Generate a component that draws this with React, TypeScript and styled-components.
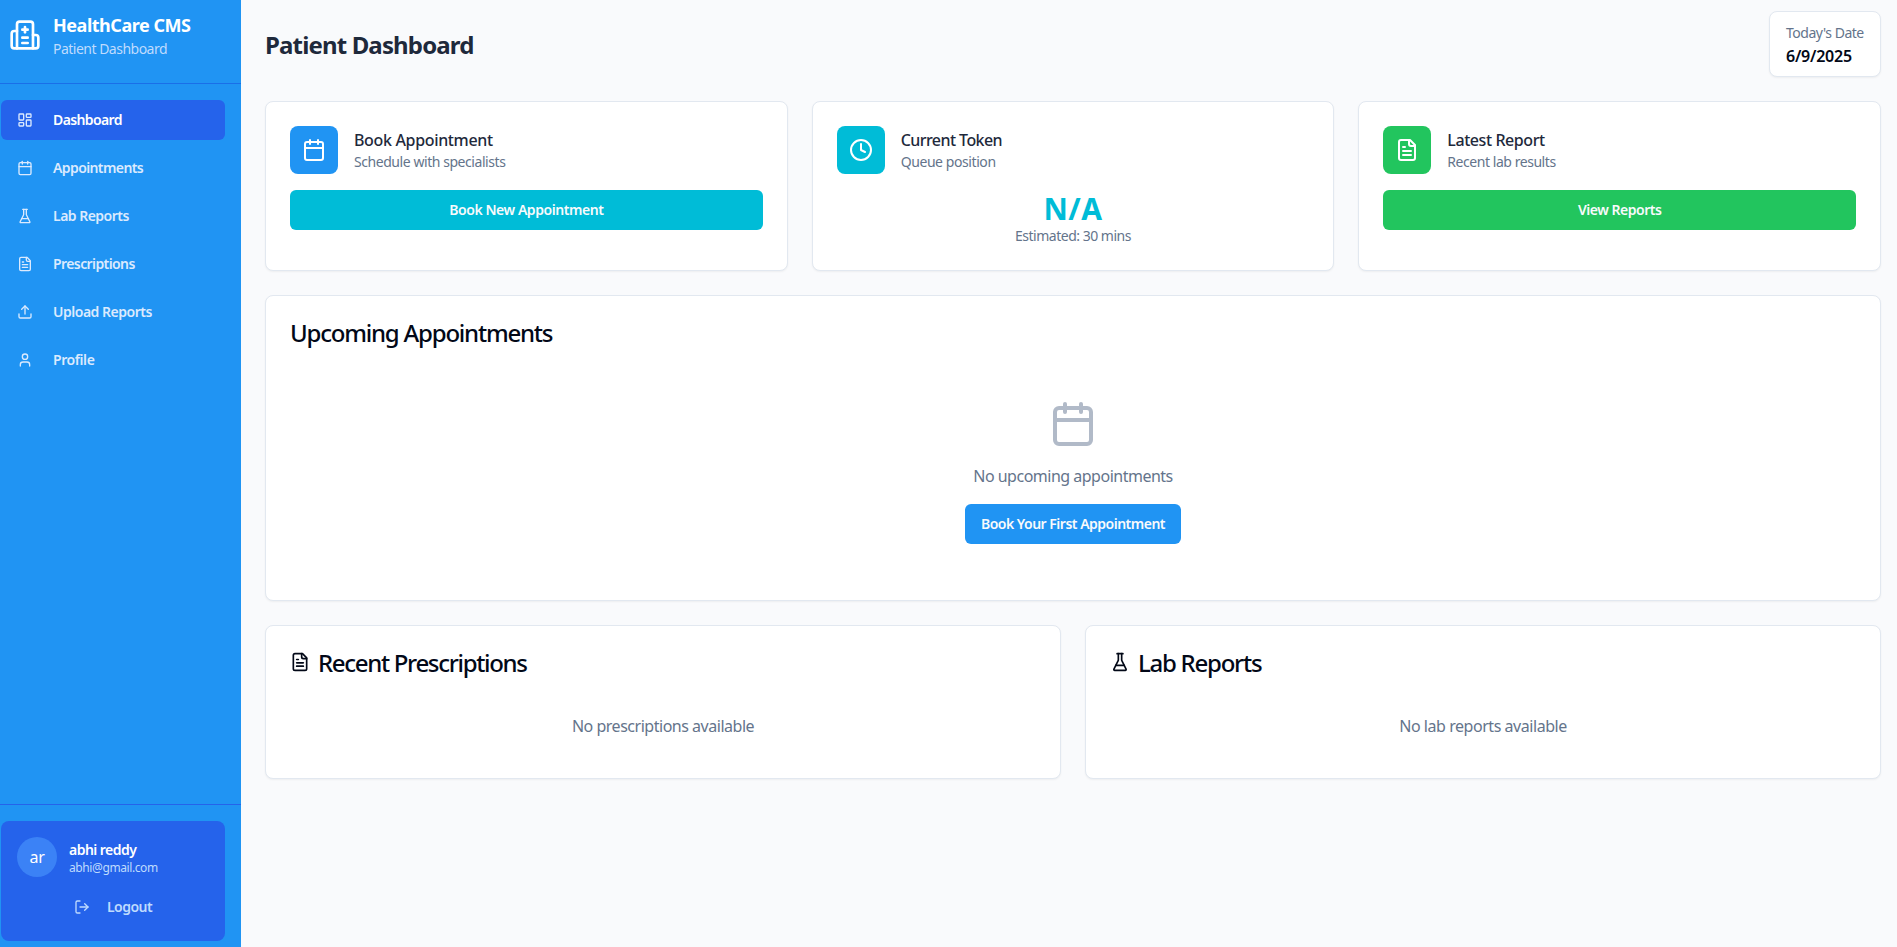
import React from "react";
import styled, { createGlobalStyle } from "styled-components";
import { Calendar, Clock, LayoutDashboard, LogOut, Upload, User } from "lucide-react";

const GlobalStyle = createGlobalStyle`
  *, *::before, *::after { box-sizing: border-box; }
  html, body { margin: 0; padding: 0; }
  body {
    font-family: "Segoe UI", "Noto Sans", "Open Sans", sans-serif;
    font-size: 16px;
    line-height: 24px;
    color: #020817;
    background: #f9fafc;
  }
  h1, h2, h3, p { margin: 0; }
  button { font: inherit; border: 0; padding: 0; cursor: pointer; }
  svg { display: block; flex: none; }
`;

type Spaced = { $ls: number };

const Shell = styled.div`
  display: flex;
  height: 947px;
  overflow: hidden;
`;

const Sidebar = styled.aside`
  display: flex;
  flex-direction: column;
  flex: none;
  width: 241px;
  background: #2094f3;
  color: #fff;
`;

const Brand = styled.div`
  display: flex;
  align-items: flex-start;
  gap: 12px;
  height: 84px;
  padding: 11px 9px 0;
  border-bottom: 1px solid #1a6fe8;

  svg { margin-top: 8px; }
`;

const BrandName = styled.h2<Spaced>`
  font-size: 18px;
  line-height: 28px;
  font-weight: 700;
  letter-spacing: ${(p) => p.$ls}px;
`;

const BrandSub = styled.p<Spaced>`
  font-size: 14px;
  line-height: 20px;
  color: #bfdbfe;
  letter-spacing: ${(p) => p.$ls}px;
`;

const Nav = styled.nav`
  display: flex;
  flex: 1;
  flex-direction: column;
  gap: 8px;
  padding: 16px 16px 0 1px;
`;

const NavItem = styled.button<Spaced & { $active?: boolean }>`
  display: flex;
  align-items: center;
  gap: 20px;
  height: 40px;
  padding: 0 16px;
  border-radius: 6px;
  background: ${(p) => (p.$active ? "#2563eb" : "transparent")};
  color: ${(p) => (p.$active ? "#fff" : "#dbeafe")};
  font-size: 14px;
  font-weight: 600;
  letter-spacing: ${(p) => p.$ls}px;

  svg { color: #dbeafe; }
`;

const SidebarFooter = styled.div`
  padding: 16px 16px 6px 1px;
  border-top: 1px solid #2563eb;
`;

const UserCard = styled.div`
  height: 120px;
  padding: 16px;
  border-radius: 8px;
  background: #2563eb;
`;

const UserRow = styled.div`
  display: flex;
  align-items: center;
  gap: 12px;
  height: 40px;
`;

const Avatar = styled.div`
  display: flex;
  align-items: center;
  justify-content: center;
  width: 40px;
  height: 40px;
  border-radius: 50%;
  background: #3b82f6;
  letter-spacing: -0.4px;
`;

const UserText = styled.div`
  padding-top: 2px;
`;

const UserName = styled.p<Spaced>`
  font-size: 14px;
  line-height: 20px;
  font-weight: 600;
  letter-spacing: ${(p) => p.$ls}px;
`;

const UserMail = styled.p<Spaced>`
  font-size: 12px;
  line-height: 16px;
  color: #bfdbfe;
  letter-spacing: ${(p) => p.$ls}px;
`;

const LogoutButton = styled.button<Spaced>`
  display: flex;
  align-items: center;
  justify-content: center;
  gap: 17px;
  width: 100%;
  height: 36px;
  margin-top: 12px;
  background: transparent;
  color: #bfdbfe;
  font-size: 14px;
  font-weight: 600;
  letter-spacing: ${(p) => p.$ls}px;
`;

const Main = styled.main`
  display: flex;
  flex: 1;
  flex-direction: column;
  gap: 24px;
  padding: 11px 16px 0 24px;
`;

const PageHeader = styled.header`
  display: flex;
  align-items: center;
  justify-content: space-between;
  height: 66px;
`;

const PageTitle = styled.h1<Spaced>`
  padding-top: 2px;
  font-size: 24px;
  line-height: 32px;
  font-weight: 700;
  color: #1e293b;
  letter-spacing: ${(p) => p.$ls}px;
`;

const Card = styled.section`
  padding: 24px;
  border: 1px solid #e2e8f0;
  border-radius: 8px;
  background: #fff;
  box-shadow: 0 1px 2px rgba(0, 0, 0, 0.05);
`;

const DateCard = styled(Card)`
  width: 112px;
  height: 66px;
  padding: 11px 16px;
`;

const Muted = styled.p<Spaced>`
  font-size: 14px;
  line-height: 20px;
  color: #64748b;
  white-space: nowrap;
  letter-spacing: ${(p) => p.$ls}px;
`;

const DateValue = styled.p<Spaced>`
  font-weight: 600;
  line-height: 27px;
  letter-spacing: ${(p) => p.$ls}px;
`;

const Stats = styled.div`
  display: grid;
  grid-template-columns: repeat(3, 1fr);
  gap: 24px;

  ${Card} { height: 170px; }
`;

const StatHead = styled.div`
  display: flex;
  align-items: center;
  gap: 16px;
  margin-bottom: 16px;
`;

const IconTile = styled.div<{ $color: string }>`
  display: flex;
  align-items: center;
  justify-content: center;
  width: 48px;
  height: 48px;
  border-radius: 8px;
  background: ${(p) => p.$color};
  color: #fff;
`;

const StatTitle = styled.h3<Spaced>`
  font-size: 16px;
  line-height: 24px;
  font-weight: 500;
  color: #1e293b;
  letter-spacing: ${(p) => p.$ls}px;
`;

const Button = styled.button<Spaced & { $color: string; $block?: boolean }>`
  display: flex;
  align-items: center;
  justify-content: center;
  width: ${(p) => (p.$block ? "100%" : "216px")};
  height: 40px;
  border-radius: 6px;
  background: ${(p) => p.$color};
  color: #f8fafc;
  font-size: 14px;
  font-weight: 600;
  white-space: nowrap;
  letter-spacing: ${(p) => p.$ls}px;
`;

const Token = styled.div`
  display: flex;
  flex-direction: column;
  align-items: center;
`;

const TokenValue = styled.p`
  height: 36px;
  font-size: 30px;
  line-height: 37px;
  font-weight: 700;
  color: #00bcd7;
  letter-spacing: 0.5px;
`;

const CardTitle = styled.h2<Spaced>`
  display: flex;
  align-items: center;
  gap: 8px;
  height: 24px;
  font-size: 24px;
  font-weight: 500;
  line-height: 26px;
  letter-spacing: ${(p) => p.$ls}px;
`;

const TitleText = styled.span`
  padding-top: 2px;
`;

const EmptyAppointments = styled.div`
  display: flex;
  flex-direction: column;
  align-items: center;
  gap: 16px;
  padding: 56px 0 32px;

  svg { color: #b1bac8; }
`;

const EmptyText = styled.p<Spaced & { $pad?: boolean }>`
  padding: ${(p) => (p.$pad ? "40px 0 16px" : "0")};
  text-align: center;
  color: #64748b;
  letter-spacing: ${(p) => p.$ls}px;
`;

const Columns = styled.div`
  display: grid;
  grid-template-columns: repeat(2, 1fr);
  gap: 24px;
`;

const Glyph = ({ size, children }: { size: number; children: React.ReactNode }) => (
  <svg
    width={size}
    height={size}
    viewBox="0 0 24 24"
    fill="none"
    stroke="currentColor"
    strokeWidth={2}
    strokeLinecap="round"
    strokeLinejoin="round"
  >
    {children}
  </svg>
);

const HospitalIcon = ({ size }: { size: number }) => (
  <Glyph size={size}>
    <path d="M12 6v4" />
    <path d="M14 14h-4" />
    <path d="M14 18h-4" />
    <path d="M14 8h-4" />
    <path d="M18 12h2a2 2 0 0 1 2 2v6a2 2 0 0 1-2 2H4a2 2 0 0 1-2-2v-9a2 2 0 0 1 2-2h2" />
    <path d="M18 22V4a2 2 0 0 0-2-2H8a2 2 0 0 0-2 2v18" />
  </Glyph>
);

const FileIcon = ({ size }: { size: number }) => (
  <Glyph size={size}>
    <path d="M15 2H6a2 2 0 0 0-2 2v16a2 2 0 0 0 2 2h12a2 2 0 0 0 2-2V7Z" />
    <path d="M14 2v4a2 2 0 0 0 2 2h4" />
    <path d="M10 9H8" />
    <path d="M16 13H8" />
    <path d="M16 17H8" />
  </Glyph>
);

const FlaskIcon = ({ size }: { size: number }) => (
  <Glyph size={size}>
    <path d="M10 2v7.527a2 2 0 0 1-.211.896L4.72 20.55a1 1 0 0 0 .9 1.45h12.76a1 1 0 0 0 .9-1.45l-5.069-10.127A2 2 0 0 1 14 9.527V2" />
    <path d="M8.5 2h7" />
    <path d="M7 16h10" />
  </Glyph>
);

const navItems = [
  { label: "Dashboard", Icon: LayoutDashboard, ls: -0.62 },
  { label: "Appointments", Icon: Calendar, ls: -0.6 },
  { label: "Lab Reports", Icon: FlaskIcon, ls: -0.51 },
  { label: "Prescriptions", Icon: FileIcon, ls: -0.59 },
  { label: "Upload Reports", Icon: Upload, ls: -0.48 },
  { label: "Profile", Icon: User, ls: -0.42 },
];

export default function App() {
  return (
    <>
      <GlobalStyle />
      <Shell>
        <Sidebar>
          <Brand>
            <HospitalIcon size={32} />
            <div>
              <BrandName $ls={-0.47}>HealthCare CMS</BrandName>
              <BrandSub $ls={-0.51}>Patient Dashboard</BrandSub>
            </div>
          </Brand>
          <Nav>
            {navItems.map(({ label, Icon, ls }, i) => (
              <NavItem key={label} $active={i === 0} $ls={ls}>
                <Icon size={16} />
                {label}
              </NavItem>
            ))}
          </Nav>
          <SidebarFooter>
            <UserCard>
              <UserRow>
                <Avatar>ar</Avatar>
                <UserText>
                  <UserName $ls={-0.53}>abhi reddy</UserName>
                  <UserMail $ls={-0.4}>abhi@gmail.com</UserMail>
                </UserText>
              </UserRow>
              <LogoutButton $ls={-0.52}>
                <LogOut size={16} />
                Logout
              </LogoutButton>
            </UserCard>
          </SidebarFooter>
        </Sidebar>

        <Main>
          <PageHeader>
            <PageTitle $ls={-0.85}>Patient Dashboard</PageTitle>
            <DateCard>
              <Muted $ls={-0.48}>Today's Date</Muted>
              <DateValue $ls={-0.22}>6/9/2025</DateValue>
            </DateCard>
          </PageHeader>

          <Stats>
            <Card>
              <StatHead>
                <IconTile $color="#2094f3">
                  <Calendar size={24} />
                </IconTile>
                <div>
                  <StatTitle $ls={-0.34}>Book Appointment</StatTitle>
                  <Muted $ls={-0.44}>Schedule with specialists</Muted>
                </div>
              </StatHead>
              <Button $block $color="#00bcd7" $ls={-0.44}>
                Book New Appointment
              </Button>
            </Card>
            <Card>
              <StatHead>
                <IconTile $color="#00bcd7">
                  <Clock size={24} />
                </IconTile>
                <div>
                  <StatTitle $ls={-0.56}>Current Token</StatTitle>
                  <Muted $ls={-0.42}>Queue position</Muted>
                </div>
              </StatHead>
              <Token>
                <TokenValue>N/A</TokenValue>
                <Muted $ls={-0.49}>Estimated: 30 mins</Muted>
              </Token>
            </Card>
            <Card>
              <StatHead>
                <IconTile $color="#22c55e">
                  <FileIcon size={24} />
                </IconTile>
                <div>
                  <StatTitle $ls={-0.43}>Latest Report</StatTitle>
                  <Muted $ls={-0.45}>Recent lab results</Muted>
                </div>
              </StatHead>
              <Button $block $color="#22c55e" $ls={-0.48}>
                View Reports
              </Button>
            </Card>
          </Stats>

          <Card>
            <CardTitle $ls={-1.21}>
              <TitleText>Upcoming Appointments</TitleText>
            </CardTitle>
            <EmptyAppointments>
              <Calendar size={48} />
              <EmptyText $ls={-0.5}>No upcoming appointments</EmptyText>
              <Button $color="#2094f3" $ls={-0.5}>
                Book Your First Appointment
              </Button>
            </EmptyAppointments>
          </Card>

          <Columns>
            <Card>
              <CardTitle $ls={-1.32}>
                <FileIcon size={20} />
                <TitleText>Recent Prescriptions</TitleText>
              </CardTitle>
              <EmptyText $pad $ls={-0.48}>
                No prescriptions available
              </EmptyText>
            </Card>
            <Card>
              <CardTitle $ls={-1.26}>
                <FlaskIcon size={20} />
                <TitleText>Lab Reports</TitleText>
              </CardTitle>
              <EmptyText $pad $ls={-0.45}>
                No lab reports available
              </EmptyText>
            </Card>
          </Columns>
        </Main>
      </Shell>
    </>
  );
}
